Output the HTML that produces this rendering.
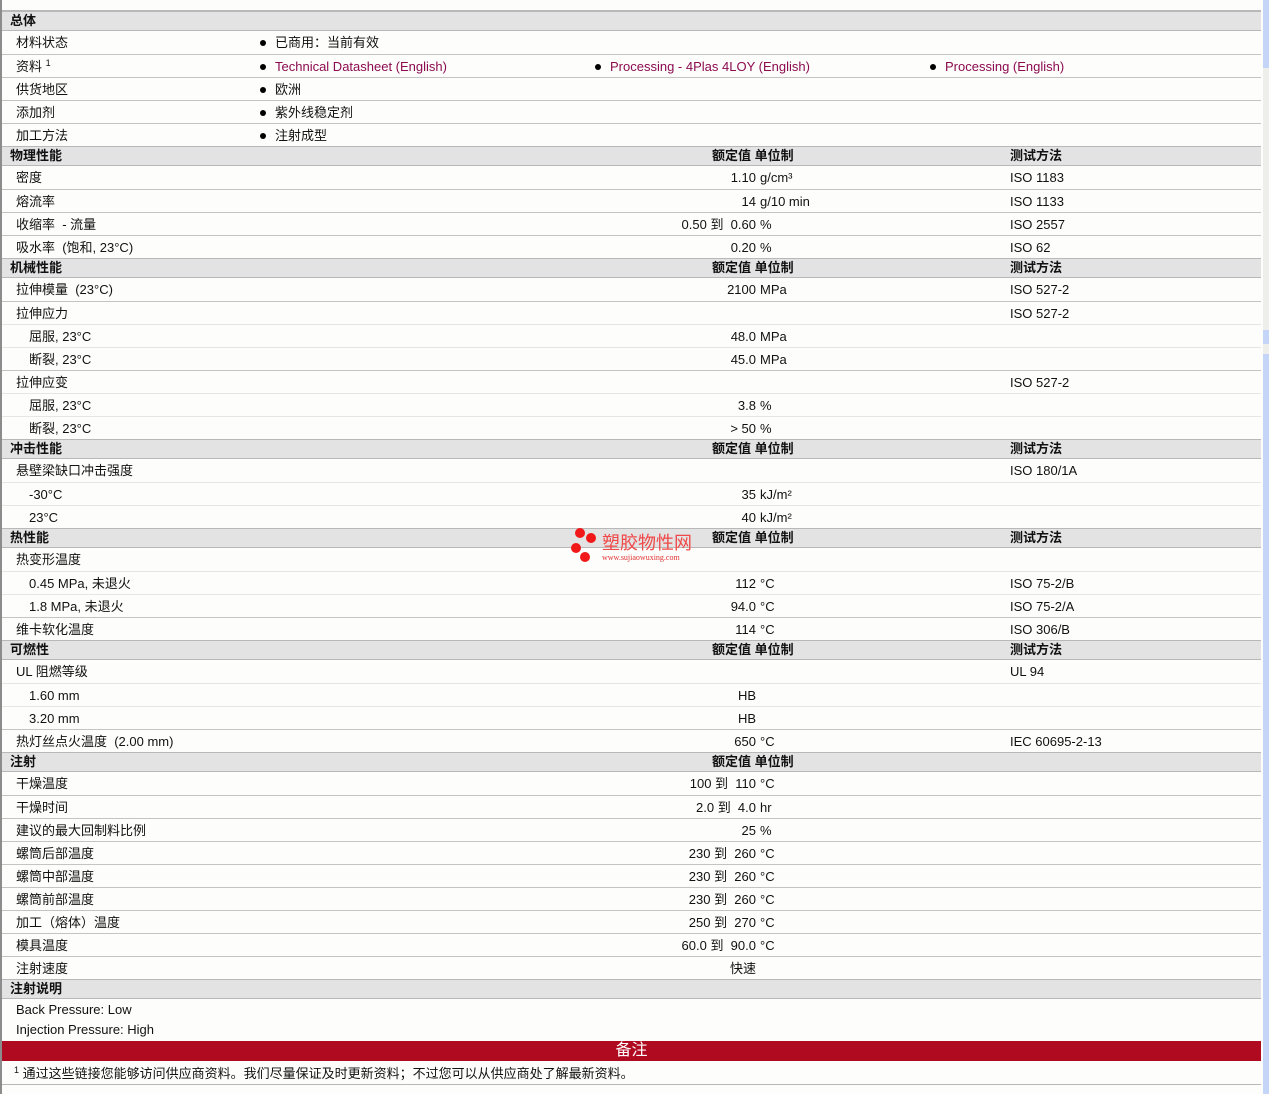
<!DOCTYPE html>
<html><head><meta charset="utf-8">
<style>
*{margin:0;padding:0;box-sizing:border-box}
body{width:1269px;height:1094px;background:#fdfefc;font-family:"Liberation Sans","Noto Sans CJK SC",sans-serif;font-size:13px;color:#111;position:relative;overflow:hidden}
#t{position:absolute;left:2px;top:10px;width:1259px;border-top:1px solid #b8b8b8}
#lb{position:absolute;left:0;top:0;width:2px;height:1094px;background:#8c8c8c}
.r{position:relative;height:23px;border-top:1px solid #c4c4c4;line-height:23px;white-space:nowrap}
.r.s{border-top-color:#e6e6e6}
.h{position:relative;height:20px;background:#e3e3e3;border-top:1px solid #b8b8b8;border-bottom:1px solid #b8b8b8;line-height:18px;font-weight:bold;white-space:nowrap}
.h+.r{border-top:none}
.h .l{left:8px}
.l{position:absolute;left:14px}
.s .l{left:27px}
.v{position:absolute;right:505px;text-align:right}
.u{position:absolute;left:758px}
.m{position:absolute;left:1008px}
.hv{position:absolute;left:710px}
.b{position:absolute}
.b::before{content:"";position:absolute;left:-15px;top:9px;width:6px;height:6px;border-radius:50%;background:#000}
a{color:#8c0a4e;text-decoration:none}
sup{font-size:9px;position:relative;top:-5px;vertical-align:baseline;line-height:0}
.red{height:20px;background:#b00a20;color:#fff;text-align:center;font-size:16px;line-height:20px;margin-top:2px}
.n{height:24px;border-bottom:1px solid #b8b8b8;line-height:26px}
.nt{height:20px;line-height:22px;padding-left:14px}
#sb{position:absolute;left:1263px;top:0;width:6px;height:1094px;background:#c5d5f8}
</style></head><body>
<div id="lb"></div>
<div id="sb"><div style="position:absolute;top:68px;height:262px;width:6px;background:#eeeeea"></div><div style="position:absolute;top:344px;height:10px;width:6px;background:#eeeeea"></div></div>
<div id="t">
<div class="h"><span class="l">总体</span></div>
<div class="r"><span class="l">材料状态</span><span class="b" style="left:273px">已商用：当前有效</span></div>
<div class="r"><span class="l">资料 <sup>1</sup></span><span class="b" style="left:273px"><a>Technical Datasheet (English)</a></span><span class="b" style="left:608px"><a>Processing - 4Plas 4LOY (English)</a></span><span class="b" style="left:943px"><a>Processing (English)</a></span></div>
<div class="r"><span class="l">供货地区</span><span class="b" style="left:273px">欧洲</span></div>
<div class="r"><span class="l">添加剂</span><span class="b" style="left:273px">紫外线稳定剂</span></div>
<div class="r"><span class="l">加工方法</span><span class="b" style="left:273px">注射成型</span></div>
<div class="h"><span class="l">物理性能</span><span class="hv">额定值 单位制</span><span class="m">测试方法</span></div>
<div class="r"><span class="l">密度</span><span class="v">1.10</span><span class="u">g/cm³</span><span class="m">ISO 1183</span></div>
<div class="r"><span class="l">熔流率</span><span class="v">14</span><span class="u">g/10 min</span><span class="m">ISO 1133</span></div>
<div class="r"><span class="l">收缩率 &nbsp;- 流量</span><span class="v">0.50 到 &nbsp;0.60</span><span class="u">%</span><span class="m">ISO 2557</span></div>
<div class="r"><span class="l">吸水率 &nbsp;(饱和, 23°C)</span><span class="v">0.20</span><span class="u">%</span><span class="m">ISO 62</span></div>
<div class="h"><span class="l">机械性能</span><span class="hv">额定值 单位制</span><span class="m">测试方法</span></div>
<div class="r"><span class="l">拉伸模量 &nbsp;(23°C)</span><span class="v">2100</span><span class="u">MPa</span><span class="m">ISO 527-2</span></div>
<div class="r"><span class="l">拉伸应力</span><span class="m">ISO 527-2</span></div>
<div class="r s"><span class="l">屈服, 23°C</span><span class="v">48.0</span><span class="u">MPa</span></div>
<div class="r s"><span class="l">断裂, 23°C</span><span class="v">45.0</span><span class="u">MPa</span></div>
<div class="r"><span class="l">拉伸应变</span><span class="m">ISO 527-2</span></div>
<div class="r s"><span class="l">屈服, 23°C</span><span class="v">3.8</span><span class="u">%</span></div>
<div class="r s"><span class="l">断裂, 23°C</span><span class="v">&gt; 50</span><span class="u">%</span></div>
<div class="h"><span class="l">冲击性能</span><span class="hv">额定值 单位制</span><span class="m">测试方法</span></div>
<div class="r"><span class="l">悬壁梁缺口冲击强度</span><span class="m">ISO 180/1A</span></div>
<div class="r s"><span class="l">-30°C</span><span class="v">35</span><span class="u">kJ/m²</span></div>
<div class="r s"><span class="l">23°C</span><span class="v">40</span><span class="u">kJ/m²</span></div>
<div class="h"><span class="l">热性能</span><span class="hv">额定值 单位制</span><span class="m">测试方法</span></div>
<div class="r"><span class="l">热变形温度</span></div>
<div class="r s"><span class="l">0.45 MPa, 未退火</span><span class="v">112</span><span class="u">°C</span><span class="m">ISO 75-2/B</span></div>
<div class="r s"><span class="l">1.8 MPa, 未退火</span><span class="v">94.0</span><span class="u">°C</span><span class="m">ISO 75-2/A</span></div>
<div class="r"><span class="l">维卡软化温度</span><span class="v">114</span><span class="u">°C</span><span class="m">ISO 306/B</span></div>
<div class="h"><span class="l">可燃性</span><span class="hv">额定值 单位制</span><span class="m">测试方法</span></div>
<div class="r"><span class="l">UL 阻燃等级</span><span class="m">UL 94</span></div>
<div class="r s"><span class="l">1.60 mm</span><span class="v">HB</span></div>
<div class="r s"><span class="l">3.20 mm</span><span class="v">HB</span></div>
<div class="r"><span class="l">热灯丝点火温度 &nbsp;(2.00 mm)</span><span class="v">650</span><span class="u">°C</span><span class="m">IEC 60695-2-13</span></div>
<div class="h"><span class="l">注射</span><span class="hv">额定值 单位制</span></div>
<div class="r"><span class="l">干燥温度</span><span class="v">100 到 &nbsp;110</span><span class="u">°C</span></div>
<div class="r"><span class="l">干燥时间</span><span class="v">2.0 到 &nbsp;4.0</span><span class="u">hr</span></div>
<div class="r"><span class="l">建议的最大回制料比例</span><span class="v">25</span><span class="u">%</span></div>
<div class="r"><span class="l">螺筒后部温度</span><span class="v">230 到 &nbsp;260</span><span class="u">°C</span></div>
<div class="r"><span class="l">螺筒中部温度</span><span class="v">230 到 &nbsp;260</span><span class="u">°C</span></div>
<div class="r"><span class="l">螺筒前部温度</span><span class="v">230 到 &nbsp;260</span><span class="u">°C</span></div>
<div class="r"><span class="l">加工（熔体）温度</span><span class="v">250 到 &nbsp;270</span><span class="u">°C</span></div>
<div class="r"><span class="l">模具温度</span><span class="v">60.0 到 &nbsp;90.0</span><span class="u">°C</span></div>
<div class="r"><span class="l">注射速度</span><span class="v">快速</span></div>
<div class="h"><span class="l">注射说明</span></div>
<div class="nt">Back Pressure: Low</div>
<div class="nt">Injection Pressure: High</div>
<div class="red">备注</div>
<div class="n" style="padding-left:12px"><sup>1</sup> 通过这些链接您能够访问供应商资料。我们尽量保证及时更新资料；不过您可以从供应商处了解最新资料。</div>
</div>
<div style="position:absolute;left:573px;top:528px">
<div style="position:absolute;left:2px;top:0;width:10px;height:10px;border-radius:50%;background:#f01818"></div>
<div style="position:absolute;left:13px;top:5px;width:10px;height:10px;border-radius:50%;background:#f01818"></div>
<div style="position:absolute;left:-2px;top:15px;width:10px;height:10px;border-radius:50%;background:#f01818"></div>
<div style="position:absolute;left:7px;top:24px;width:10px;height:10px;border-radius:50%;background:#f01818"></div>
<div style="position:absolute;left:29px;top:5px;font-size:18px;line-height:20px;color:#f04848;white-space:nowrap">塑胶物性网</div>
<div style="position:absolute;left:29px;top:25px;font-family:'Liberation Serif',serif;font-size:8px;color:#e03030;white-space:nowrap">www.sujiaowuxing.com</div>
</div>
</body></html>
